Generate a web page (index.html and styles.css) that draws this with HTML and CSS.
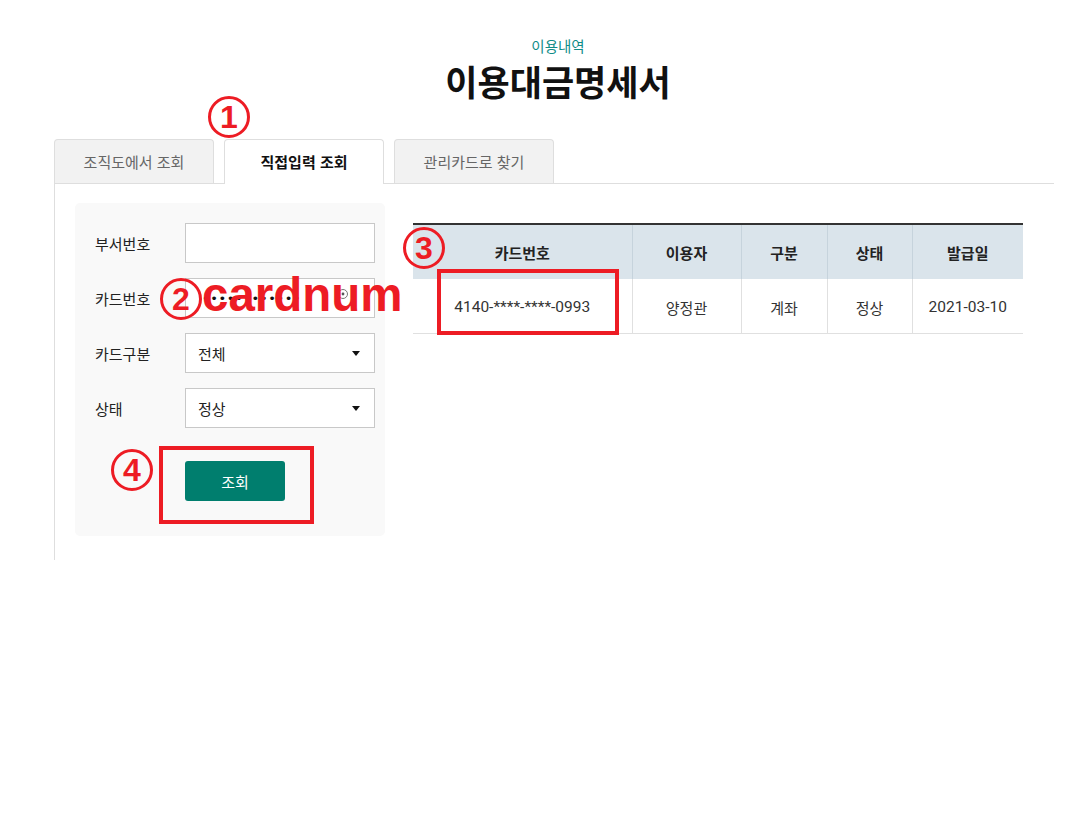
FILE: index.html
```html
<!DOCTYPE html>
<html lang="ko">
<head>
<meta charset="utf-8">
<title>이용대금명세서</title>
<link rel="stylesheet" href="styles.css">
</head>
<body>
<div class="page">
  <header class="head">
    <div class="eyebrow">이용내역</div>
    <h1 class="title">이용대금명세서</h1>
  </header>

  <div class="tabs">
    <div class="tab">조직도에서 조회</div>
    <div class="tab active">직접입력 조회</div>
    <div class="tab">관리카드로 찾기</div>
  </div>

  <div class="panel">
    <form class="search">
      <div class="row">
        <label class="lbl">부서번호</label>
        <input class="field" type="text">
      </div>
      <div class="row">
        <label class="lbl">카드번호</label>
        <div class="field pw">
          <span class="dots">••••••••••••</span>
          <svg class="eye" width="12" height="12" viewBox="0 0 12 12"><circle cx="6" cy="6" r="4.5" fill="none" stroke="#777" stroke-width="1"/><circle cx="6" cy="6" r="1.4" fill="#555"/></svg>
        </div>
      </div>
      <div class="row">
        <label class="lbl">카드구분</label>
        <div class="field select">전체<span class="caret"></span></div>
      </div>
      <div class="row">
        <label class="lbl">상태</label>
        <div class="field select">정상<span class="caret"></span></div>
      </div>
      <div class="btnrow">
        <button class="btn" type="button">조회</button>
      </div>
    </form>

    <table class="result">
      <thead>
        <tr><th class="c1">카드번호</th><th class="c2">이용자</th><th class="c3">구분</th><th class="c4">상태</th><th class="c5">발급일</th></tr>
      </thead>
      <tbody>
        <tr><td class="num">4140-****-****-0993</td><td>양정관</td><td>계좌</td><td>정상</td><td class="num">2021-03-10</td></tr>
      </tbody>
    </table>
  </div>
</div>

<div class="mark n1">1</div>
<div class="mark n2">2</div>
<div class="mark n3">3</div>
<div class="mark n4">4</div>
<div class="note">cardnum</div>
<div class="box b1"></div>
<div class="box b2"></div>
</body>
</html>
```

FILE: styles.css
```css
* { box-sizing: border-box; }
html, body { margin: 0; padding: 0; background: #fff; }
body {
  font-family: "Noto Sans CJK KR", "Noto Sans", sans-serif;
  color: #222;
  width: 1080px;
  height: 828px;
  position: relative;
  overflow: hidden;
}
.page { padding-left: 54px; }

.head { width: 1008px; text-align: center; padding-top: 35px; }
.eyebrow { font-size: 14.5px; line-height: 22px; color: #0f8d88; }
.title { margin: 3px 0 0; font-size: 35px; line-height: 42px; font-weight: 700; color: #111; }

.tabs { display: flex; gap: 10px; margin-top: 37px; height: 44px; }
.tab {
  width: 160px; height: 44px;
  background: #f2f2f2;
  border: 1px solid #dedede; border-bottom: none;
  border-radius: 4px 4px 0 0;
  font-size: 15px; line-height: 44px; text-align: center; color: #666;
}
.tab.active { background: #fff; color: #111; font-weight: 700; height: 45px; position: relative; z-index: 1; }

.panel {
  width: 1000px; height: 377px;
  border-top: 1px solid #dedede; border-left: 1px solid #dedede;
  padding: 19px 0 0 20px;
  display: flex; align-items: flex-start; gap: 28px;
}

.search {
  width: 310px; height: 333px;
  background: #f9f9f9; border-radius: 5px;
  padding: 20px 10px 0 20px;
  display: flex; flex-direction: column; gap: 15px;
}
.row { display: flex; align-items: center; height: 40px; }
.lbl { width: 90px; font-size: 15px; color: #222; }
.field {
  width: 190px; height: 40px;
  border: 1px solid #c8c8c8; background: #fff;
  font-family: "Noto Sans CJK KR", sans-serif; font-size: 15px; color: #222;
  padding: 0 12px; outline: none;
}
.pw { display: flex; align-items: center; justify-content: space-between; padding: 0 25px 0 16px; }
.dots { font-family: "DejaVu Sans", sans-serif; font-size: 13px; letter-spacing: 0.6px; color: #111; }
.eye { margin-top: -8px; }
.select { display: flex; align-items: center; justify-content: space-between; padding-right: 14px; }
.caret { width: 0; height: 0; border-left: 4px solid transparent; border-right: 4px solid transparent; border-top: 5px solid #111; }

.btnrow { padding: 18px 0 0 90px; }
.btn {
  width: 100px; height: 40px; border: none; border-radius: 3px;
  background: #007e6e; color: #fff;
  font-family: "Noto Sans CJK KR", sans-serif; font-size: 15px;
}

.result {
  margin-top: 20px;
  width: 610px; border-collapse: collapse;
  border-top: 2px solid #333;
  font-size: 15px; text-align: center;
}
.result th {
  background: #dae4eb; height: 55px; font-weight: 700; color: #222;
  border-left: 1px solid #c6d3dc;
}
.result td {
  height: 54px; padding-top: 4px; color: #333; border-left: 1px solid #e0e0e0;
  border-bottom: 1px solid #e0e0e0;
}
.result td.num { font-family: "Roboto", "Noto Sans CJK KR", sans-serif; font-size: 15.5px; }
.result th:first-child, .result td:first-child { border-left: none; }
.c1 { width: 219px; } .c2 { width: 109px; } .c3 { width: 86px; } .c4 { width: 85px; } .c5 { width: 111px; }

/* annotation overlays */
.mark {
  position: absolute; width: 42px; height: 42px;
  border: 3px solid #ed1c24; border-radius: 50%;
  color: #ed1c24; font-family: "Liberation Sans", Arial, sans-serif; font-weight: 700;
  font-size: 32px; line-height: 37px; text-align: center;
}
.n1 { left: 208px; top: 96px; }
.n2 { left: 160px; top: 278px; }
.n3 { left: 403px; top: 227px; }
.n4 { left: 111px; top: 449px; }
.note {
  position: absolute; left: 202px; top: 270px;
  font-family: "Liberation Sans", Arial, sans-serif; font-weight: 700;
  font-size: 47.5px; line-height: 50px; color: #ed1c24;
}
.box { position: absolute; border: 4px solid #ed1c24; }
.b1 { left: 437px; top: 269px; width: 182px; height: 66px; }
.b2 { left: 159px; top: 446px; width: 155px; height: 78px; }
```
